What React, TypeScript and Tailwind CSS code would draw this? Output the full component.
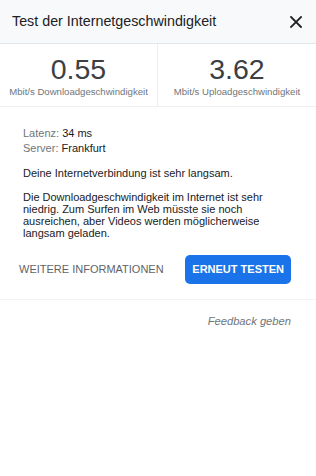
import React from "react";

type StatProps = {
  value: string;
  label: string;
  divider?: boolean;
};

const Stat = ({ value, label, divider }: StatProps) => (
  <div
    className={`flex flex-col items-center pt-[11px] ${
      divider ? "border-r border-[#eeeff0]" : ""
    }`}
  >
    <div className="text-[28.5px] leading-none text-[#3c4043]">{value}</div>
    <div className="mt-[3px] text-[9.6px] leading-none text-[#70757a]">
      {label}
    </div>
  </div>
);

const CloseIcon = () => (
  <svg width="12" height="12" viewBox="0 0 12 12" aria-hidden="true">
    <path
      d="M1 1 L11 11 M11 1 L1 11"
      stroke="#202124"
      strokeWidth="1.8"
      strokeLinecap="square"
    />
  </svg>
);

const App = () => {
  return (
    <div className="w-[316px] h-[476px] bg-white font-['Liberation_Sans',Arial,sans-serif]">
      <div className="h-[44px] bg-[#f8f9fa] border-b border-[#e3e5e8] flex items-center justify-between pl-[12px] pr-[14px]">
        <span className="text-[14.3px] leading-none text-[#202124]">
          Test der Internetgeschwindigkeit
        </span>
        <CloseIcon />
      </div>

      <div className="grid grid-cols-2 h-[63px] border-b border-[#eeeff0]">
        <Stat value="0.55" label="Mbit/s Downloadgeschwindigkeit" divider />
        <Stat value="3.62" label="Mbit/s Uploadgeschwindigkeit" />
      </div>

      <div className="px-[23px] pt-[19px] text-[11px] text-[#202124]">
        <div className="leading-[15px]">
          <span className="text-[#70757a]">Latenz:</span> 34 ms
        </div>
        <div className="leading-[15px]">
          <span className="text-[#70757a]">Server:</span> Frankfurt
        </div>
        <p className="mt-[10px] leading-[15px]">
          Deine Internetverbindung ist sehr langsam.
        </p>
        <p className="mt-[10px] leading-[12px]">
          Die Downloadgeschwindigkeit im Internet ist sehr niedrig. Zum Surfen
          im Web müsste sie noch ausreichen, aber Videos werden möglicherweise
          langsam geladen.
        </p>
      </div>

      <div className="mt-[16px] flex items-center justify-between pl-[19px] pr-[25px]">
        <button type="button" className="text-[11px] leading-none text-[#5f6368]">
          WEITERE INFORMATIONEN
        </button>
        <button
          type="button"
          className="h-[29px] px-[7px] rounded-[5px] bg-[#1a73e8] text-white text-[11px] font-bold leading-none"
        >
          ERNEUT TESTEN
        </button>
      </div>

      <div className="mt-[15px] border-t border-[#f3f3f4]" />

      <div className="mt-[16px] pr-[25px] text-right text-[11.2px] leading-none italic text-[#70757a]">
        Feedback geben
      </div>
    </div>
  );
};

export default App;
